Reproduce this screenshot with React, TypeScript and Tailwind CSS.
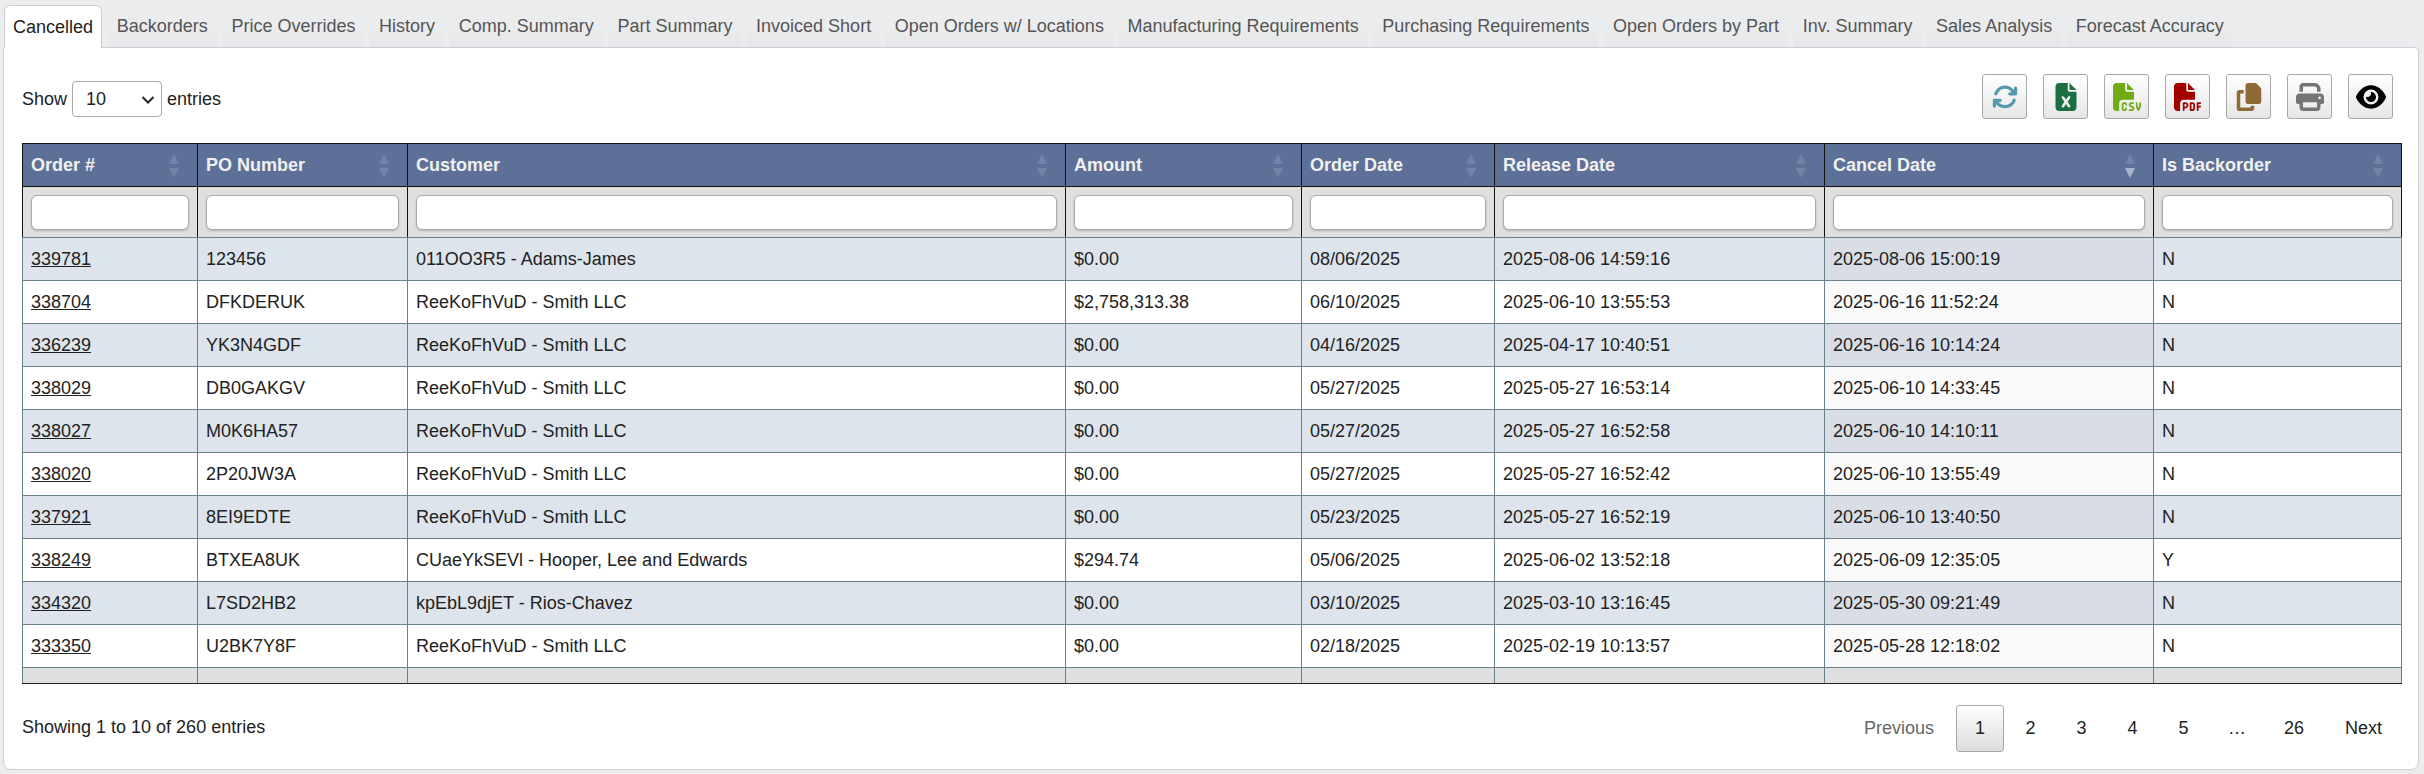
import { FaEye, FaPrint, FaCopy, FaFileExcel, FaFileCsv, FaFilePdf, FaArrowsRotate } from 'react-icons/fa6'
import type { IconType } from 'react-icons'

const tabs = [
  'Backorders',
  'Price Overrides',
  'History',
  'Comp. Summary',
  'Part Summary',
  'Invoiced Short',
  'Open Orders w/ Locations',
  'Manufacturing Requirements',
  'Purchasing Requirements',
  'Open Orders by Part',
  'Inv. Summary',
  'Sales Analysis',
  'Forecast Accuracy',
]

const columns = [
  { label: 'Order #', width: 'w-[175px]' },
  { label: 'PO Number', width: 'w-[210px]' },
  { label: 'Customer', width: 'w-[658px]' },
  { label: 'Amount', width: 'w-[236px]' },
  { label: 'Order Date', width: 'w-[193px]' },
  { label: 'Release Date', width: 'w-[330px]' },
  { label: 'Cancel Date', width: 'w-[329px]', sorted: true },
  { label: 'Is Backorder', width: 'w-[248px]' },
]

const rows = [
  ['339781', '123456', '011OO3R5 - Adams-James', '$0.00', '08/06/2025', '2025-08-06 14:59:16', '2025-08-06 15:00:19', 'N'],
  ['338704', 'DFKDERUK', 'ReeKoFhVuD - Smith LLC', '$2,758,313.38', '06/10/2025', '2025-06-10 13:55:53', '2025-06-16 11:52:24', 'N'],
  ['336239', 'YK3N4GDF', 'ReeKoFhVuD - Smith LLC', '$0.00', '04/16/2025', '2025-04-17 10:40:51', '2025-06-16 10:14:24', 'N'],
  ['338029', 'DB0GAKGV', 'ReeKoFhVuD - Smith LLC', '$0.00', '05/27/2025', '2025-05-27 16:53:14', '2025-06-10 14:33:45', 'N'],
  ['338027', 'M0K6HA57', 'ReeKoFhVuD - Smith LLC', '$0.00', '05/27/2025', '2025-05-27 16:52:58', '2025-06-10 14:10:11', 'N'],
  ['338020', '2P20JW3A', 'ReeKoFhVuD - Smith LLC', '$0.00', '05/27/2025', '2025-05-27 16:52:42', '2025-06-10 13:55:49', 'N'],
  ['337921', '8EI9EDTE', 'ReeKoFhVuD - Smith LLC', '$0.00', '05/23/2025', '2025-05-27 16:52:19', '2025-06-10 13:40:50', 'N'],
  ['338249', 'BTXEA8UK', 'CUaeYkSEVl - Hooper, Lee and Edwards', '$294.74', '05/06/2025', '2025-06-02 13:52:18', '2025-06-09 12:35:05', 'Y'],
  ['334320', 'L7SD2HB2', 'kpEbL9djET - Rios-Chavez', '$0.00', '03/10/2025', '2025-03-10 13:16:45', '2025-05-30 09:21:49', 'N'],
  ['333350', 'U2BK7Y8F', 'ReeKoFhVuD - Smith LLC', '$0.00', '02/18/2025', '2025-02-19 10:13:57', '2025-05-28 12:18:02', 'N'],
]

const tools: { icon: IconType; color: string; size: string }[] = [
  { icon: FaArrowsRotate, color: 'text-[#5598b0]', size: 'text-[26px]' },
  { icon: FaFileExcel, color: 'text-[#1d6f42]', size: 'text-[28px]' },
  { icon: FaFileCsv, color: 'text-[#6fac14]', size: 'text-[28px]' },
  { icon: FaFilePdf, color: 'text-[#a30000]', size: 'text-[28px]' },
  { icon: FaCopy, color: 'text-[#8f6a37]', size: 'text-[28px]' },
  { icon: FaPrint, color: 'text-[#757575]', size: 'text-[28px]' },
  { icon: FaEye, color: 'text-black', size: 'text-[30px]' },
]

const pages = ['2', '3', '4', '5']

function SortArrows({ sorted }: { sorted?: boolean }) {
  return (
    <svg viewBox="0 0 12 24" className="absolute right-[17px] top-[10px] h-6 w-3">
      <path d="M6 0 11 10H1Z" fill="#7183a6" />
      <path d="M1 14H11L6 24Z" fill={sorted ? '#a9b4ca' : '#7183a6'} />
    </svg>
  )
}

export default function App() {
  return (
    <div className="min-h-[774px] bg-[#ebecee] px-[3px] pt-[5px] font-['Liberation_Sans',Arial,sans-serif] text-[18px] text-[#222]">
      <div className="flex items-end gap-[5.65px] pl-px">
        <div className="relative z-10 -mb-px flex h-[43px] items-center rounded-t-md border border-b-0 border-[#cdcfd4] bg-white px-[8px] text-[#222]">
          Cancelled
        </div>
        {tabs.map((tab) => (
          <div key={tab} className="relative flex h-[42px] items-center px-[9px] text-[#555]">
            <span className="absolute inset-x-0 bottom-0 h-[20px] bg-gradient-to-b from-[#ebecee] to-[#e6e7e9]" />
            <span className="relative">{tab}</span>
          </div>
        ))}
      </div>

      <div className="h-[723px] w-[2416px] rounded-b-lg rounded-tr-sm border border-[#cdcfd4] bg-white px-[18px]">
        <div className="flex h-[95px] items-start justify-between pt-[26px]">
          <div className="mt-[7px] flex items-center gap-[5px]">
            <span>Show</span>
            <div className="relative">
              <select className="block h-[36px] w-[90px] appearance-none rounded-[4px] border border-[#aaa] bg-white pl-[13px]">
                <option>10</option>
              </select>
              <svg viewBox="0 0 14 8" className="pointer-events-none absolute right-[7px] top-[15px] h-2 w-[14px]">
                <path d="M1.5 1 7 6.5 12.5 1" fill="none" stroke="#222" strokeWidth="2" />
              </svg>
            </div>
            <span>entries</span>
          </div>
          <div className="flex gap-[16px] pr-[7px]">
            {tools.map(({ icon: Icon, color, size }, i) => (
              <button
                key={i}
                type="button"
                className={`flex h-[45px] w-[45px] items-center justify-center rounded-[3px] border border-[#a8a8a8] bg-gradient-to-b from-white to-[#e6e6e6] ${color} ${size}`}
              >
                <Icon />
              </button>
            ))}
          </div>
        </div>

        <table className="w-[2379px] table-fixed border-collapse">
          <colgroup>
            {columns.map((c) => (
              <col key={c.label} className={c.width} />
            ))}
          </colgroup>
          <thead>
            <tr className="h-[43px] bg-[#5d7097]">
              {columns.map((c) => (
                <th
                  key={c.label}
                  className="relative border border-[#111] px-2 text-left font-bold text-[#f0f0f0]"
                >
                  {c.label}
                  <SortArrows sorted={c.sorted} />
                </th>
              ))}
            </tr>
            <tr className="h-[51px] bg-[#dfdfdf]">
              {columns.map((c) => (
                <th key={c.label} className="border border-x-[#111] border-t-[#111] border-b-[#6b7f8c] px-2">
                  <input className="block h-[35px] w-full rounded-[6px] border border-[#aaa] bg-white shadow-[0_1px_2px_rgba(0,0,0,0.2)]" />
                </th>
              ))}
            </tr>
          </thead>
          <tbody>
            {rows.map((row, r) => (
              <tr key={row[0]} className={`h-[43px] ${r % 2 === 0 ? 'bg-[#dde4ec]' : 'bg-white'}`}>
                {row.map((cell, c) => (
                  <td
                    key={c}
                    className={`border border-[#6b7f8c] px-2 ${
                      c === 6 ? (r % 2 === 0 ? 'bg-[#d8dde6]' : 'bg-[#fafafa]') : ''
                    }`}
                  >
                    {c === 0 ? <a className="underline">{cell}</a> : cell}
                  </td>
                ))}
              </tr>
            ))}
          </tbody>
          <tfoot>
            <tr className="h-[16px] bg-[#dfdfdf]">
              {columns.map((c) => (
                <td key={c.label} className="border border-x-[#6b7f8c] border-t-[#8a969f] border-b-[#222]" />
              ))}
            </tr>
          </tfoot>
        </table>

        <div className="mt-[21px] flex w-[2379px] items-center justify-between">
          <span className="mt-[-2px]">Showing 1 to 10 of 260 entries</span>
          <div className="flex items-center gap-[2px]">
            <span className="pl-[19px] pr-[20px] py-[9px] text-[#666]">Previous</span>
            <span className="h-[47px] w-[48px] rounded-[3px] border border-[#a8a8a8] bg-gradient-to-b from-white to-[#dcdcdc] py-[9px] text-center">
              1
            </span>
            {pages.map((p) => (
              <span key={p} className="w-[49px] py-[9px] text-center">
                {p}
              </span>
            ))}
            <span className="px-[18px]">…</span>
            <span className="w-[56px] py-[9px] text-center">26</span>
            <span className="pl-[21px] pr-[19px] py-[9px]">Next</span>
          </div>
        </div>
      </div>
    </div>
  )
}
